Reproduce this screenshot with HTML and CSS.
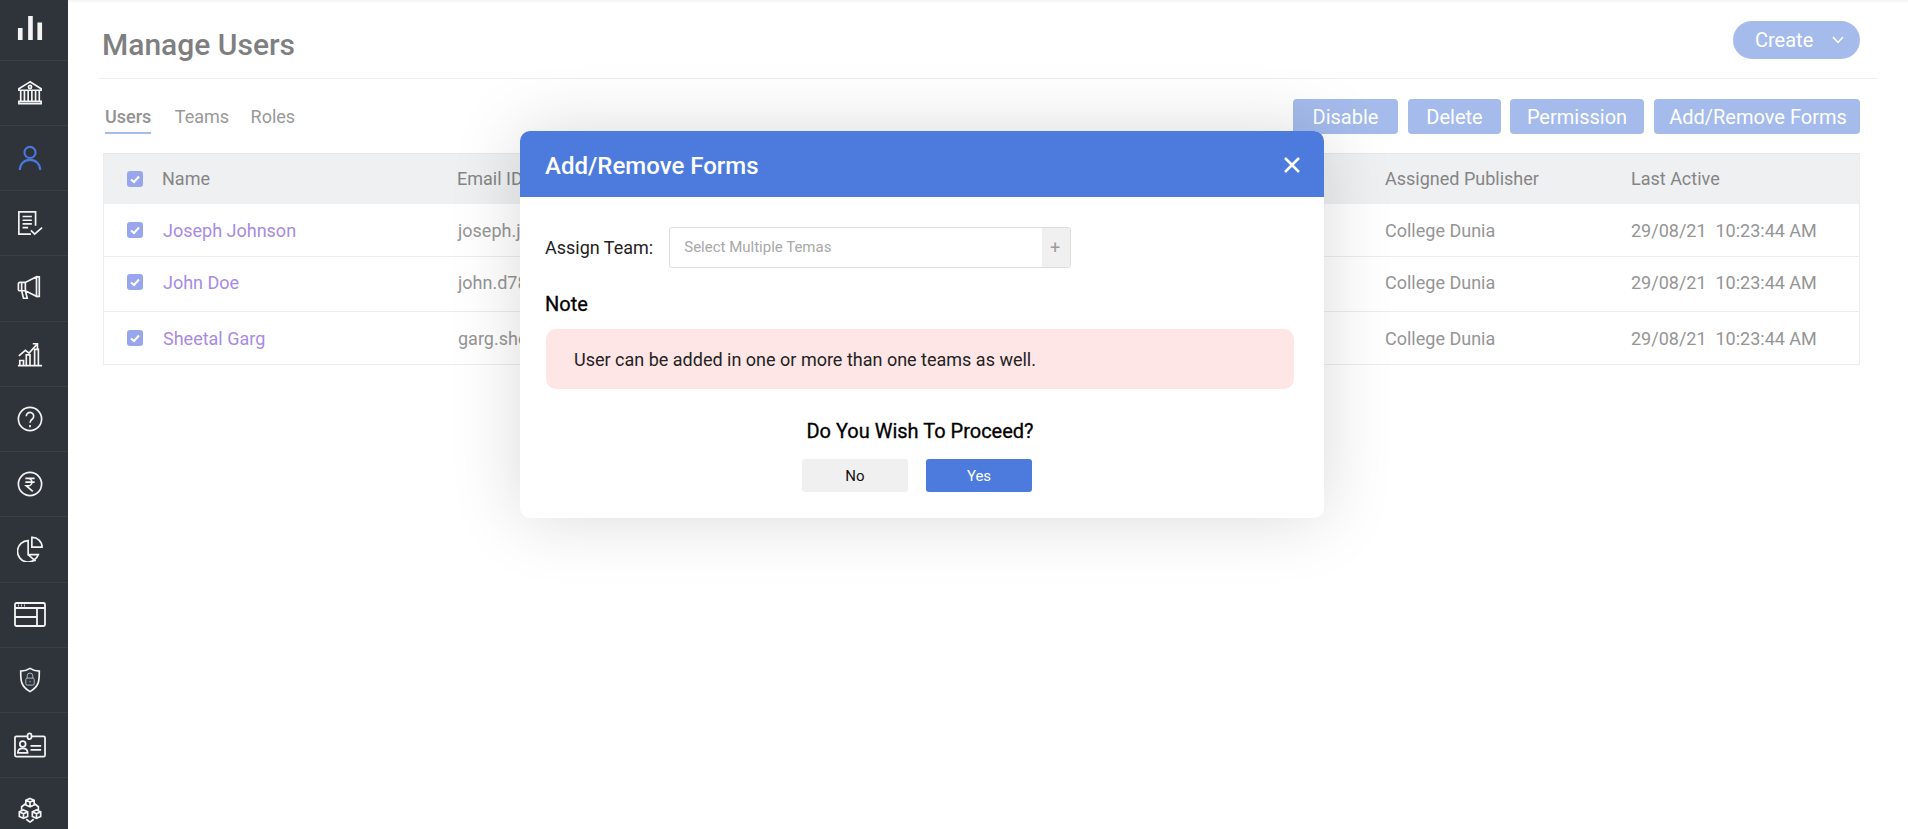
FILE: index.html
```html
<!DOCTYPE html>
<html lang="en">
<head>
    <meta charset="UTF-8">
    <meta name="viewport" content="width=device-width, initial-scale=1.0">
    <title>Manage Users</title>
    <link rel="stylesheet" href="styles.css">
</head>
<body>
    <div class="page">
        <!-- Sidebar -->
        <nav class="sidebar">
            <a class="side-item side-first"><svg viewBox="0 0 28 28"><path class="solid" d="M1 14h5v13H1zM12 1h5v26h-5zM22 8h5v19h-5z"/></svg></a>
            <a class="side-item"><svg viewBox="0 0 28 28"><path d="M14 2 2 9.500v1.500h24V9.500zM2 25.500h24v-2.500H2zM4 23V11M8 23V11M12 23V11M16 23V11M20 23V11M24 23V11"/><circle cx="14" cy="7.500" r="1.700"/></svg></a>
            <a class="side-item side-active"><svg viewBox="0 0 28 28"><circle cx="14" cy="8" r="6"/><path d="M3 27c0-6.500 4.500-11 11-11s11 4.500 11 11"/></svg></a>
            <a class="side-item"><svg viewBox="0 0 28 28"><path d="M20 17V2H2v24h13M6 7h10M6 11h10M6 15h10M6 19h6M15 22l4 4 8-7"/></svg></a>
            <a class="side-item"><svg viewBox="0 0 28 28"><path d="M21 2 9 8H3a1.500 1.500 0 0 0-1.500 1.500v6A1.500 1.500 0 0 0 3 17h6l12 6zM21 2h3v21h-3M9 8v9M5 8v9M5 17l2 8h4l-2-8"/></svg></a>
            <a class="side-item"><svg viewBox="0 0 28 28"><path d="M1 26.500h26M3 26v-5h4v5M10 26V15h4v11M19 26V9h4v17M2 16l7-6 4 3 8-9M17 3h5v5"/></svg></a>
            <a class="side-item"><svg viewBox="0 0 28 28"><circle cx="14" cy="14" r="12.500"/><path d="M10 11a4 4 0 1 1 6.500 3c-1.500 1.200-2.500 2-2.500 4M14 20.500v2.500"/></svg></a>
            <a class="side-item"><svg viewBox="0 0 28 28"><circle cx="14" cy="14" r="12.500"/><path d="M9 8h10M9 12h10M10 8h2a4 4 0 0 1 0 8h-2l7 6"/></svg></a>
            <a class="side-item"><svg viewBox="0 0 28 28"><path d="M12 5a11.500 11.500 0 1 0 11 15H12zM16 1.500V12h11A10.500 10.500 0 0 0 16 1.500zM12 20l8 7"/></svg></a>
            <a class="side-item side-wide"><svg viewBox="0 0 32 26"><rect x="1" y="1" width="30" height="23" rx="1.500"/><path d="M1 6h30M23 6v18M1 15h22"/><path class="dots" d="M4 3.500h1M7 3.500h1M10 3.500h1"/></svg></a>
            <a class="side-item"><svg viewBox="0 0 28 28"><path d="M14 1.500c3 2 6 3 10 3 0 9 .5 16-10 22-10.500-6-10-13-10-22 4 0 7-1 10-3z"/><rect class="thin" x="9.500" y="12" width="9" height="7.500" rx="1.500"/><path class="thin" d="M11 12V9.500a3 3 0 0 1 6 0V12M14 15v1.500"/></svg></a>
            <a class="side-item side-wide"><svg viewBox="0 0 33 26"><rect x="1" y="4" width="31" height="21" rx="1.500"/><rect class="fill-side" x="14" y="1" width="4" height="6" rx="2"/><circle cx="9" cy="12" r="3"/><path d="M4 21c0-3 2-4.500 5-4.500s5 1.500 5 4.500zM17 14h11M17 18h11"/></svg></a>
            <a class="side-item"><svg viewBox="0 0 28 28"><path d="M14 1.500l4.500 2v5l-4.500 2-4.500-2v-5zM9.500 3.500l4.500 2 4.500-2M14 5.500v5M7 14l4.500 2v5L7 23l-4.500-2v-5zM2.500 16 7 18l4.500-2M7 18v5M21 14l4.500 2v5L21 23l-4.500-2v-5zM16.500 16l4.500 2 4.500-2M21 18v5M9.500 7 5 10.500V14M18.500 7l4.500 3.500V14M10 24l4 3 4-3"/></svg></a>
        </nav>

        <main class="main">
            <header class="top-bar">
                <h1>Manage Users</h1>
                <button class="create-btn">Create
                    <svg viewBox="0 0 12 8"><path d="M1 1l5 5.500L11 1"/></svg>
                </button>
            </header>

            <div class="toolbar">
                <div class="tabs">
                    <a class="tab tab-active">Users</a>
                    <a class="tab">Teams</a>
                    <a class="tab tab-roles">Roles</a>
                </div>
                <div class="actions">
                    <button class="action-btn btn-disable">Disable</button>
                    <button class="action-btn btn-delete">Delete</button>
                    <button class="action-btn btn-permission">Permission</button>
                    <button class="action-btn btn-forms">Add/Remove Forms</button>
                </div>
            </div>

            <div class="users-table">
                <div class="row row-head">
                    <span class="check"><svg viewBox="0 0 16 16"><path d="M4 8.500l3 2.500 5-5.500"/></svg></span>
                    <span class="cell cell-name">Name</span>
                    <span class="cell cell-email">Email ID</span>
                    <span class="cell cell-pub">Assigned Publisher</span>
                    <span class="cell cell-date">Last Active</span>
                </div>
                <div class="row row-one">
                    <span class="check"><svg viewBox="0 0 16 16"><path d="M4 8.500l3 2.500 5-5.500"/></svg></span>
                    <a class="cell cell-name user-link">Joseph Johnson</a>
                    <span class="cell cell-email">joseph.johnson@gmail.com</span>
                    <span class="cell cell-pub">College Dunia</span>
                    <span class="cell cell-date">29/08/21&nbsp; 10:23:44 AM</span>
                </div>
                <div class="row row-two">
                    <span class="check"><svg viewBox="0 0 16 16"><path d="M4 8.500l3 2.500 5-5.500"/></svg></span>
                    <a class="cell cell-name user-link">John Doe</a>
                    <span class="cell cell-email">john.d78@gmail.com</span>
                    <span class="cell cell-pub">College Dunia</span>
                    <span class="cell cell-date">29/08/21&nbsp; 10:23:44 AM</span>
                </div>
                <div class="row row-three">
                    <span class="check"><svg viewBox="0 0 16 16"><path d="M4 8.500l3 2.500 5-5.500"/></svg></span>
                    <a class="cell cell-name user-link">Sheetal Garg</a>
                    <span class="cell cell-email">garg.sheetal@gmail.com</span>
                    <span class="cell cell-pub">College Dunia</span>
                    <span class="cell cell-date">29/08/21&nbsp; 10:23:44 AM</span>
                </div>
            </div>
        </main>
    </div>

    <!-- Modal -->
    <div class="modal">
        <div class="modal-head">
            <h2>Add/Remove Forms</h2>
            <svg class="modal-close" viewBox="0 0 18 18"><path d="M2 2l14 14M16 2 2 16"/></svg>
        </div>
        <div class="modal-body">
            <div class="assign-row">
                <label>Assign Team:</label>
                <div class="team-input">
                    <span class="placeholder">Select Multiple Temas</span>
                    <span class="plus">+</span>
                </div>
            </div>
            <div class="note-title">Note</div>
            <div class="note-box">User can be added in one or more than one teams as well.</div>
            <div class="proceed">Do You Wish To Proceed?</div>
            <div class="modal-btns">
                <button class="btn-no">No</button>
                <button class="btn-yes">Yes</button>
            </div>
        </div>
    </div>
</body>
</html>
```

FILE: styles.css
```css
* { box-sizing: border-box; }
html, body { height: 100%; }
body { margin: 0; font-family: Roboto, "Liberation Sans", sans-serif; background: #fff; overflow: hidden; }
button { font-family: inherit; border: none; cursor: pointer; }

.page { display: flex; height: 829px; overflow: hidden; }

/* sidebar */
.sidebar { width: 68px; flex-shrink: 0; background: #2f343b; overflow: hidden; }
.side-item { display: flex; align-items: center; justify-content: center; height: 65.25px; padding-right: 8px; border-bottom: 1px solid #3a3f45; }
.side-first { height: 60.5px; padding-bottom: 4px; }
.side-item svg { width: 26px; height: 26px; fill: none; stroke: #f4f4f4; stroke-width: 1.8; }
.side-item .solid { fill: #f4f4f4; stroke: none; }
.side-item .thin { stroke-width: 1; stroke: #b9c3cc; }
.side-item .dots { stroke-width: 2; stroke: #cfc9e8; }
.side-item .fill-side { fill: #2f343b; }
.side-active svg { stroke: #4a78dc; stroke-width: 2.2; }
.side-wide svg { width: 32px; height: 26px; }

/* main */
.main { flex: 1; padding: 0 30px; box-shadow: inset 0 4px 4px -4px rgba(0, 0, 0, 0.1); }
.top-bar { display: flex; align-items: center; justify-content: space-between; height: 79px; padding: 2px 18px 0 4px; border-bottom: 1px solid #eee; }
h1 { margin: 8px 0 0; font-size: 30px; font-weight: 500; color: #7f7f7f; }
.create-btn { display: flex; align-items: center; justify-content: space-between; width: 127px; height: 38px; padding: 0 16px 0 22px; border-radius: 19px; background: #a4bbec; color: #fff; font-size: 20px; }
.create-btn svg { width: 12px; height: 8px; fill: none; stroke: #fff; stroke-width: 1.5; }

.toolbar { display: flex; align-items: flex-start; justify-content: space-between; padding: 20px 18px 0 7px; }
.tabs { display: flex; gap: 23.5px; }
.tab { height: 35px; padding-top: 7px; font-size: 18px; color: #999; }
.tab-active { font-weight: 500; color: #929292; border-bottom: 2px solid #a4bbec; }
.tab-roles { margin-left: -2px; }
.actions { display: flex; gap: 10px; }
.action-btn { height: 35px; padding: 0; border-radius: 4px; background: #a4bbec; color: #fff; font-size: 20px; }
.btn-disable { width: 105px; }
.btn-delete { width: 93px; margin-right: -1px; }
.btn-permission { width: 134px; }
.btn-forms { width: 206px; padding-left: 2px; }

/* table */
.users-table { margin: 19px 18px 0 5px; border-left: 1px solid #ececec; border-right: 1px solid #ececec; }
.row { display: grid; grid-template-columns: 59px 294px 928px 246px 1fr; align-items: center; height: 53px; border-bottom: 1px solid #ececec; color: #959595; font-size: 18px; }
.row-head { height: 51px; padding-bottom: 1px; background: #eff0f2; border-bottom: none; border-top: 1px solid #e6e6e6; color: #858585; }
.row-two { height: 55px; padding-bottom: 4px; }
.check { display: flex; width: 16px; height: 16px; margin-left: 23px; border-radius: 3px; background: #98a6ee; }
.check svg { fill: none; stroke: #fff; stroke-width: 2; }
.cell { white-space: nowrap; overflow: hidden; }
.cell-email { padding-left: 1px; }
.row-head .cell-name { margin-left: -1px; }
.row-head .cell-email { padding-left: 0; }
.user-link { color: #a78be4; }

/* modal */
.modal { position: absolute; left: 520px; top: 131px; width: 804px; height: 387px; background: #fff; border-radius: 10px; box-shadow: 0 0 70px rgba(0, 0, 0, 0.15); }
.modal-head { display: flex; align-items: center; justify-content: space-between; height: 66px; padding: 0 23px 0 25px; background: #4c7bdd; border-radius: 10px 10px 0 0; }
.modal-head h2 { margin: 3px 0 0; font-size: 24px; font-weight: 500; color: #fff; }
.modal-close { width: 18px; height: 18px; margin-top: 2px; fill: none; stroke: #fff; stroke-width: 2.5; }
.modal-body { padding: 30px 30px 0 26px; color: #000; }
.assign-row { display: flex; align-items: center; gap: 16px; margin-left: -1px; }
.assign-row label { font-size: 18px; color: #222; }
.team-input { display: flex; align-items: center; justify-content: space-between; width: 402px; height: 41px; border: 1px solid #ddd; border-radius: 3px; overflow: hidden; }
.placeholder { margin-top: -2px; padding-left: 14px; font-size: 15px; color: #a8a8a8; }
.plus { display: flex; align-items: center; justify-content: center; width: 28px; height: 100%; padding-right: 2px; background: #f0f0f0; color: #9a9a9a; font-size: 18px; }
.note-title { margin: 24px 0 0 -1px; font-size: 20px; color: #000; -webkit-text-stroke: 0.3px #000; }
.note-box { display: flex; align-items: center; height: 60px; margin-top: 13px; padding-left: 28px; background: #ffe6e6; border-radius: 10px; font-size: 18px; color: #222; }
.proceed { margin-top: 30px; text-align: center; font-size: 20px; -webkit-text-stroke: 0.3px #000; }
.modal-btns { display: flex; justify-content: center; gap: 18px; margin-top: 16px; padding-right: 6px; }
.modal-btns button { width: 106px; height: 33px; border-radius: 3px; font-size: 15px; }
.btn-no { background: #f0f0f0; color: #111; }
.btn-yes { background: #4c7bdd; color: #fff; }
```
